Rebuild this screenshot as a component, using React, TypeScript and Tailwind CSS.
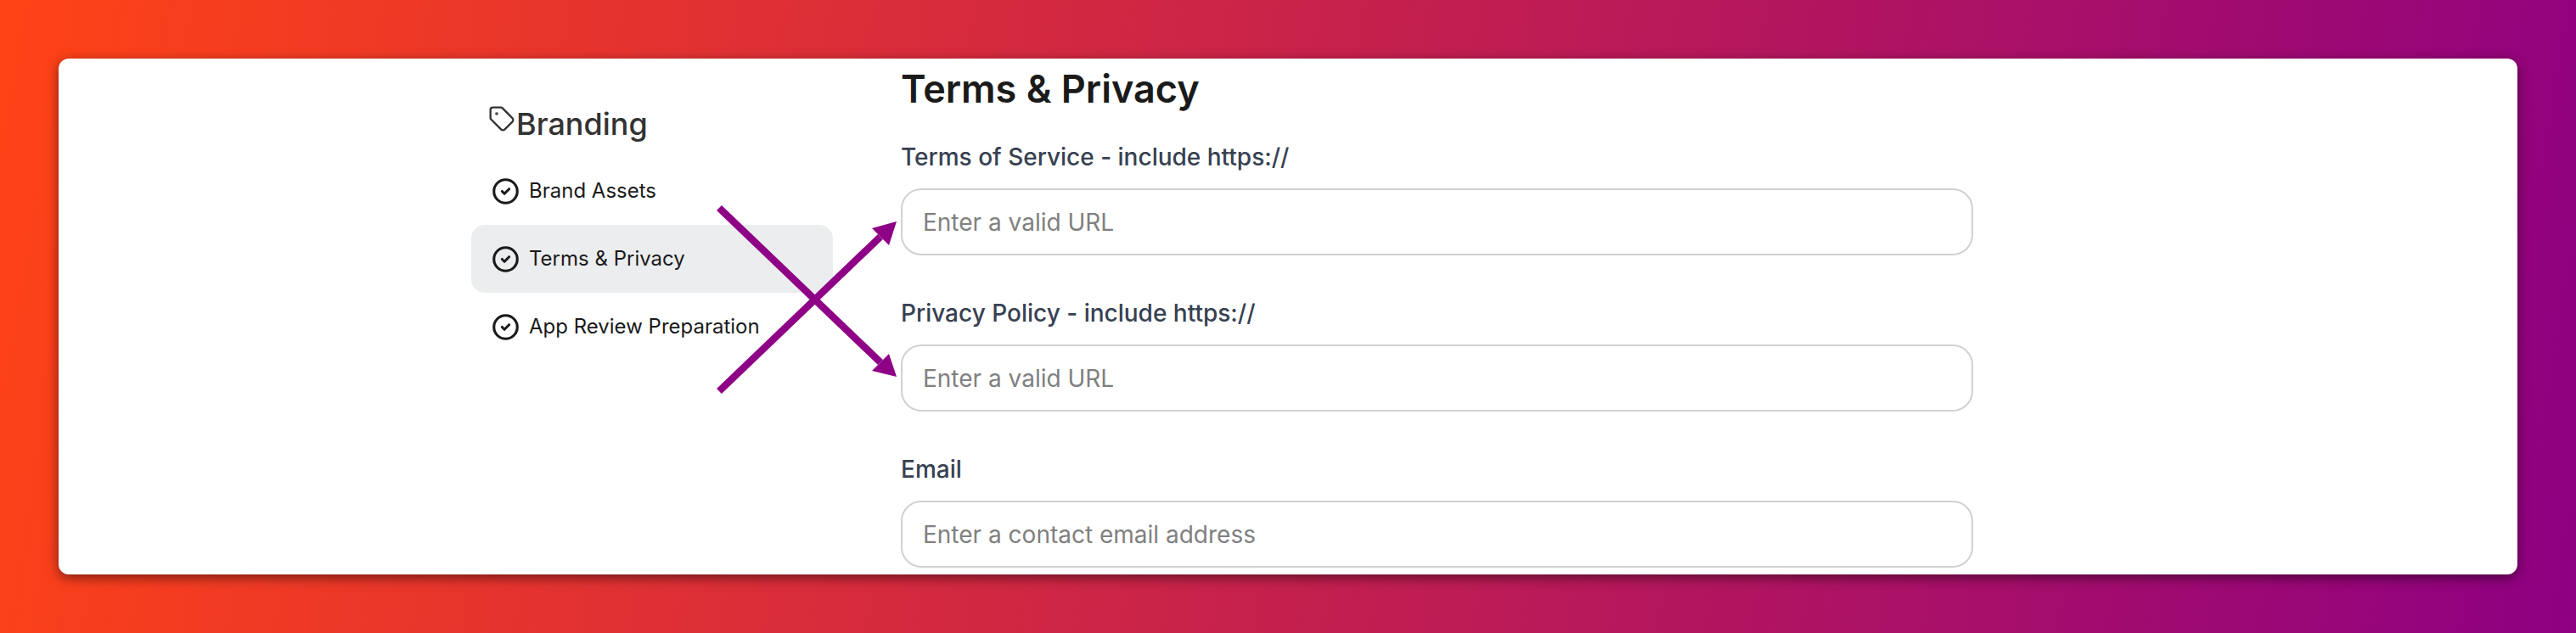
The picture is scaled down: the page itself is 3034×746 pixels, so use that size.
import { CircleCheck, Tag } from "lucide-react";

const navItems = [
  { label: "Brand Assets", active: false },
  { label: "Terms & Privacy", active: true },
  { label: "App Review Preparation", active: false },
];

const fields = [
  { label: "Terms of Service - include https://", placeholder: "Enter a valid URL" },
  { label: "Privacy Policy - include https://", placeholder: "Enter a valid URL" },
  { label: "Email", placeholder: "Enter a contact email address" },
];

function CrossArrows() {
  return (
    <svg className="absolute left-0 top-0" width="3034" height="746" viewBox="0 0 3034 746" fill="none">
      <path d="M847 245L1037 427" stroke="#8e0085" strokeWidth="8.5" />
      <path d="M1056 444L1027 437L1047 417Z" fill="#8e0085" />
      <path d="M847 461L1037 279" stroke="#8e0085" strokeWidth="8.5" />
      <path d="M1056 261L1027 269L1047 289Z" fill="#8e0085" />
    </svg>
  );
}

export default function App() {
  return (
    <div className="relative h-[746px] w-[3034px] overflow-hidden bg-[linear-gradient(100deg,#ff4316,#8e0082)] p-[69px] font-['Inter',sans-serif]">
      <div className="flex h-[608px] w-[2896px] gap-20 overflow-hidden rounded-xl bg-white pl-[486px] shadow-[0_4px_14px_rgba(0,0,0,0.5)]">
        <aside className="w-[426px] shrink-0 pt-[55px]">
          <div className="mb-[17px] flex h-11 items-center pl-[20px] text-4xl font-medium leading-[44px] text-[#333333]">
            <Tag size={32} strokeWidth={1.75} className="-mt-3 mr-px" />
            Branding
          </div>
          <nav>
            {navItems.map((item) => (
              <div
                key={item.label}
                className={`flex h-20 items-center gap-[11px] rounded-2xl pl-6 text-2xl text-[#1a1a1a] ${item.active ? "bg-[#ecedef]" : ""}`}
              >
                <CircleCheck size={33} strokeWidth={2.25} />
                {item.label}
              </div>
            ))}
          </nav>
        </aside>
        <main className="w-[1263px] pt-3">
          <h1 className="mb-9 text-[45px] font-semibold leading-12 text-[#1a1a1a]">Terms &amp; Privacy</h1>
          <div className="flex flex-col gap-12">
            {fields.map((field) => (
              <label key={field.label} className="flex flex-col gap-[17px]">
                <span className="text-[28px] font-[450] leading-10 text-[#374151]">{field.label}</span>
                <input
                  placeholder={field.placeholder}
                  className="h-[79px] rounded-3xl border-2 border-[#d1d1d1] px-6 text-[28px] outline-none placeholder:text-[#808080]"
                />
              </label>
            ))}
          </div>
        </main>
      </div>
      <CrossArrows />
    </div>
  );
}
